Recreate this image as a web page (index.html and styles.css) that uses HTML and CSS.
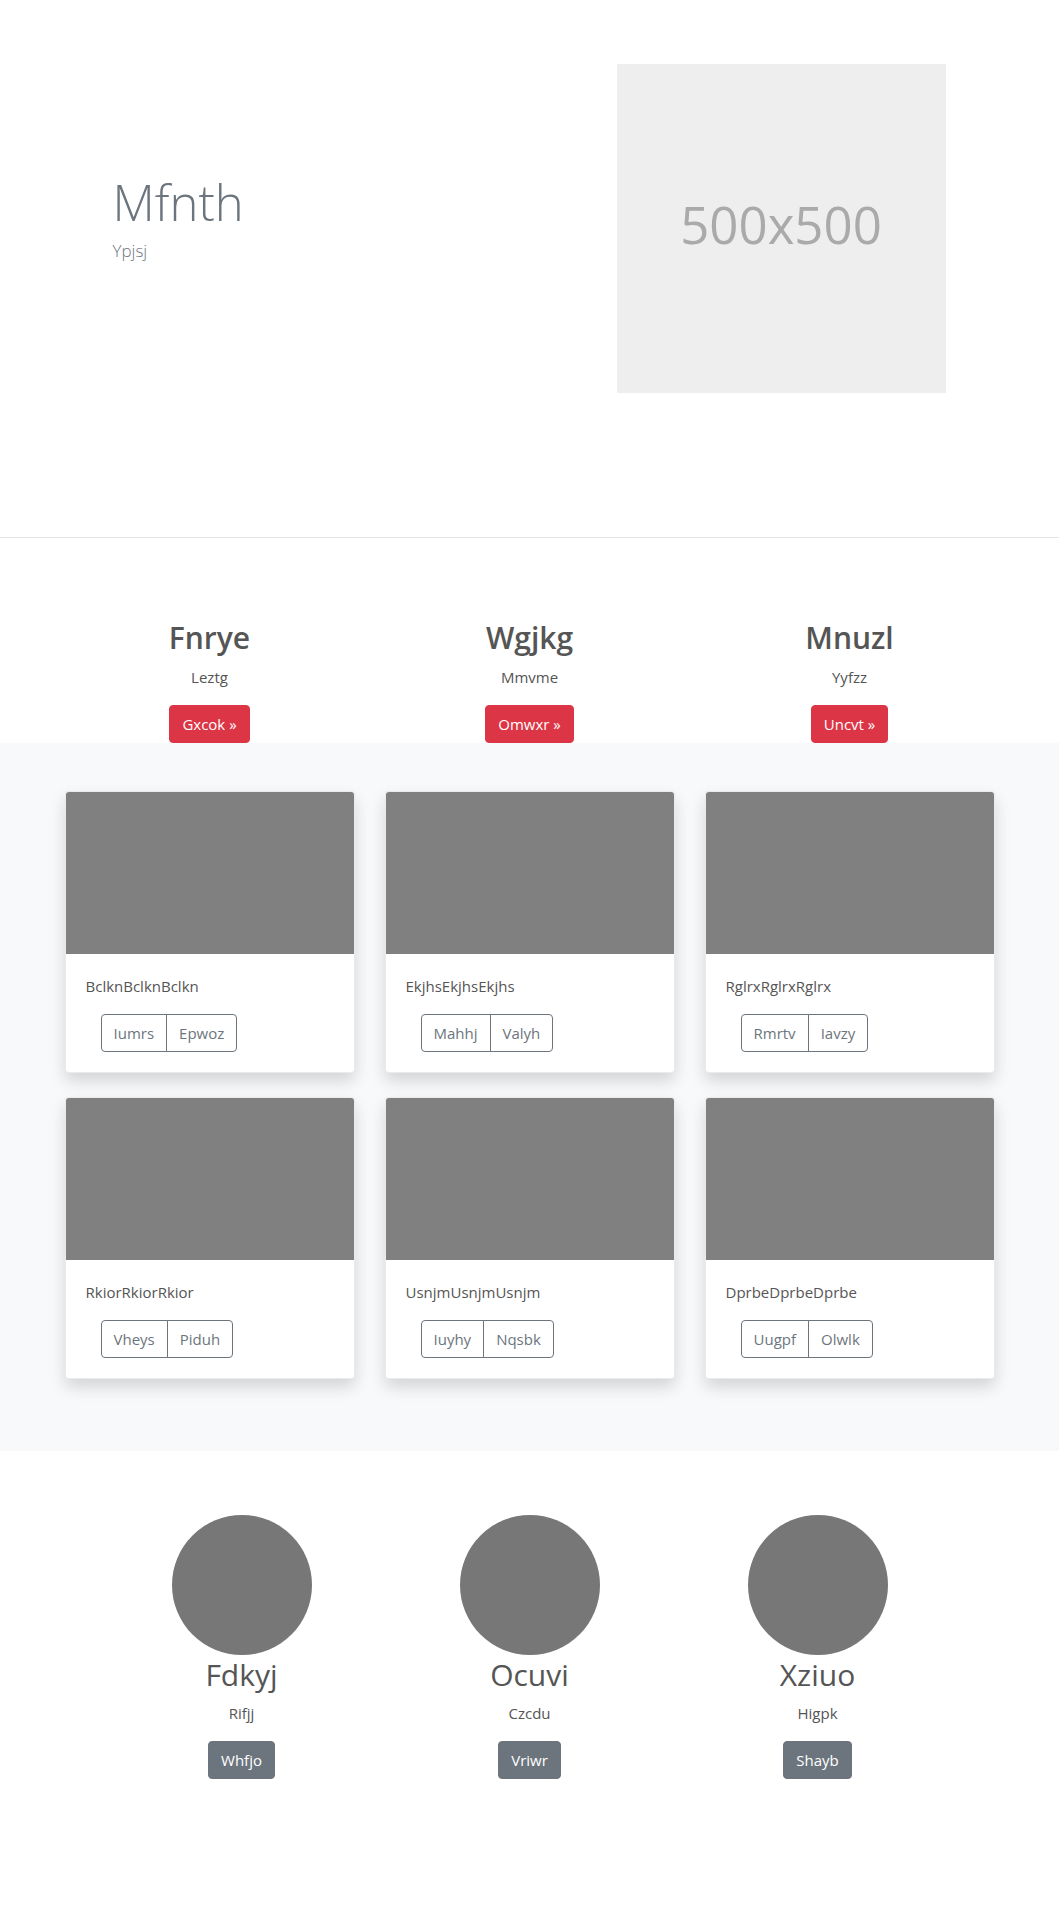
FILE: index.html
```html
<!DOCTYPE html>
<html lang="en">
<head>
<meta charset="utf-8">
<title>Page</title>
<link rel="stylesheet" href="styles.css">
</head>
<body>
<section class="hero">
  <div class="hero-inner">
    <div class="hero-text">
      <h1 class="hero-title">Mfnth</h1>
      <p class="hero-sub">Ypjsj</p>
    </div>
    <div class="hero-img"><span>500x500</span></div>
  </div>
</section>
<hr class="divider">
<section class="features">
  <div class="feature-grid">
    <div class="feature">
      <h2 class="feature-title">Fnrye</h2>
      <p class="feature-text">Leztg</p>
      <a class="btn btn-red" href="#">Gxcok &raquo;</a>
    </div>
    <div class="feature">
      <h2 class="feature-title">Wgjkg</h2>
      <p class="feature-text">Mmvme</p>
      <a class="btn btn-red" href="#">Omwxr &raquo;</a>
    </div>
    <div class="feature">
      <h2 class="feature-title">Mnuzl</h2>
      <p class="feature-text">Yyfzz</p>
      <a class="btn btn-red" href="#">Uncvt &raquo;</a>
    </div>
  </div>
</section>
<section class="album">
  <div class="card-grid">
    <div class="card">
      <div class="card-img"></div>
      <div class="card-body">
        <p class="card-text">BclknBclknBclkn</p>
        <div class="btn-group"><button class="btn btn-outline">Iumrs</button><button class="btn btn-outline">Epwoz</button></div>
      </div>
    </div>
    <div class="card">
      <div class="card-img"></div>
      <div class="card-body">
        <p class="card-text">EkjhsEkjhsEkjhs</p>
        <div class="btn-group"><button class="btn btn-outline">Mahhj</button><button class="btn btn-outline">Valyh</button></div>
      </div>
    </div>
    <div class="card">
      <div class="card-img"></div>
      <div class="card-body">
        <p class="card-text">RglrxRglrxRglrx</p>
        <div class="btn-group"><button class="btn btn-outline">Rmrtv</button><button class="btn btn-outline">Iavzy</button></div>
      </div>
    </div>
    <div class="card">
      <div class="card-img"></div>
      <div class="card-body">
        <p class="card-text">RkiorRkiorRkior</p>
        <div class="btn-group"><button class="btn btn-outline">Vheys</button><button class="btn btn-outline">Piduh</button></div>
      </div>
    </div>
    <div class="card">
      <div class="card-img"></div>
      <div class="card-body">
        <p class="card-text">UsnjmUsnjmUsnjm</p>
        <div class="btn-group"><button class="btn btn-outline">Iuyhy</button><button class="btn btn-outline">Nqsbk</button></div>
      </div>
    </div>
    <div class="card">
      <div class="card-img"></div>
      <div class="card-body">
        <p class="card-text">DprbeDprbeDprbe</p>
        <div class="btn-group"><button class="btn btn-outline">Uugpf</button><button class="btn btn-outline">Olwlk</button></div>
      </div>
    </div>
  </div>
</section>
<section class="team">
  <div class="team-grid">
    <div class="member">
      <div class="avatar"></div>
      <h2 class="member-name">Fdkyj</h2>
      <p class="member-role">Rifjj</p>
      <a class="btn btn-gray" href="#">Whfjo</a>
    </div>
    <div class="member">
      <div class="avatar"></div>
      <h2 class="member-name">Ocuvi</h2>
      <p class="member-role">Czcdu</p>
      <a class="btn btn-gray" href="#">Vriwr</a>
    </div>
    <div class="member">
      <div class="avatar"></div>
      <h2 class="member-name">Xziuo</h2>
      <p class="member-role">Higpk</p>
      <a class="btn btn-gray" href="#">Shayb</a>
    </div>
  </div>
</section>
</body>
</html>
```
FILE: styles.css
```css
* { box-sizing: border-box; }
html, body { margin: 0; padding: 0; }
body {
  font-family: "Open Sans", "Noto Sans", "Liberation Sans", sans-serif;
  font-size: 15px;
  line-height: 24px;
  color: #555;
  background: #fff;
  width: 1059px;
  min-height: 1920px;
}
h1, h2, p { margin: 0; }

/* hero */
.hero { padding: 64px 0 144px; }
.hero-inner {
  width: 834px;
  margin: 0 auto;
  display: flex;
  justify-content: space-between;
  align-items: flex-start;
}
.hero-text { padding-top: 108px; }
.hero-title {
  font-size: 49px;
  line-height: 60px;
  font-weight: 300;
  color: #6c757d;
  margin-bottom: 7px;
}
.hero-sub {
  font-size: 17px;
  line-height: 24px;
  font-weight: 300;
  color: #6c757d;
}
.hero-img {
  width: 329px;
  height: 329px;
  margin-right: 1px;
  padding-bottom: 8px;
  background: #eeeeee;
  display: flex;
  align-items: center;
  justify-content: center;
  color: #aaaaaa;
  font-size: 51px;
  line-height: 1;
}
.divider {
  margin: 0;
  border: 0;
  border-top: 1px solid #e5e5e5;
  height: 0;
}

/* buttons */
.btn {
  display: inline-block;
  font-family: inherit;
  font-size: 15px;
  line-height: 24px;
  padding: 6px 12px;
  border: 1px solid transparent;
  border-radius: 4px;
  text-decoration: none;
  background: transparent;
  cursor: pointer;
}
.btn-red { background: #dc3545; border-color: #dc3545; color: #fff; }
.btn-gray { background: #6c757d; border-color: #6c757d; color: #fff; }
.btn-outline { border-color: #6c757d; color: #6c757d; }
.btn-group { display: inline-flex; margin-left: 15px; }
.btn-group .btn:first-child { border-top-right-radius: 0; border-bottom-right-radius: 0; }
.btn-group .btn + .btn { margin-left: -1px; border-top-left-radius: 0; border-bottom-left-radius: 0; }

/* features */
.features { padding-top: 81px; }
.feature-grid {
  width: 960px;
  margin: 0 auto;
  display: grid;
  grid-template-columns: repeat(3, 1fr);
}
.feature { text-align: center; display: flex; flex-direction: column; align-items: center; }
.feature-title {
  font-size: 30px;
  line-height: 38px;
  font-weight: 600;
  color: #555;
  margin-bottom: 8px;
}
.feature-text { margin-bottom: 16px; }

/* album */
.album { background: #f8f9fa; padding: 48px 0; }
.card-grid {
  width: 930px;
  margin: 0 auto;
  display: grid;
  grid-template-columns: repeat(3, 290px);
  column-gap: 30px;
  row-gap: 24px;
  padding-bottom: 24px;
}
.card {
  background: #fff;
  border: 1px solid rgba(0, 0, 0, 0.08);
  border-radius: 4px;
  overflow: hidden;
  box-shadow: 0 8px 16px rgba(0, 0, 0, 0.15);
}
.card-img { height: 162px; background: #808080; }
.card-body { padding: 20px; }
.card-text { margin-bottom: 16px; }

/* team */
.team { padding-top: 64px; }
.team-grid {
  width: 864px;
  margin: 0 auto;
  display: grid;
  grid-template-columns: repeat(3, 1fr);
}
.member { display: flex; flex-direction: column; align-items: center; text-align: center; }
.avatar { width: 140px; height: 140px; border-radius: 50%; background: #777; }
.member-name {
  font-size: 30px;
  line-height: 40px;
  font-weight: 400;
  color: #555;
  margin-bottom: 6px;
}
.member-role { margin-bottom: 16px; }
```
